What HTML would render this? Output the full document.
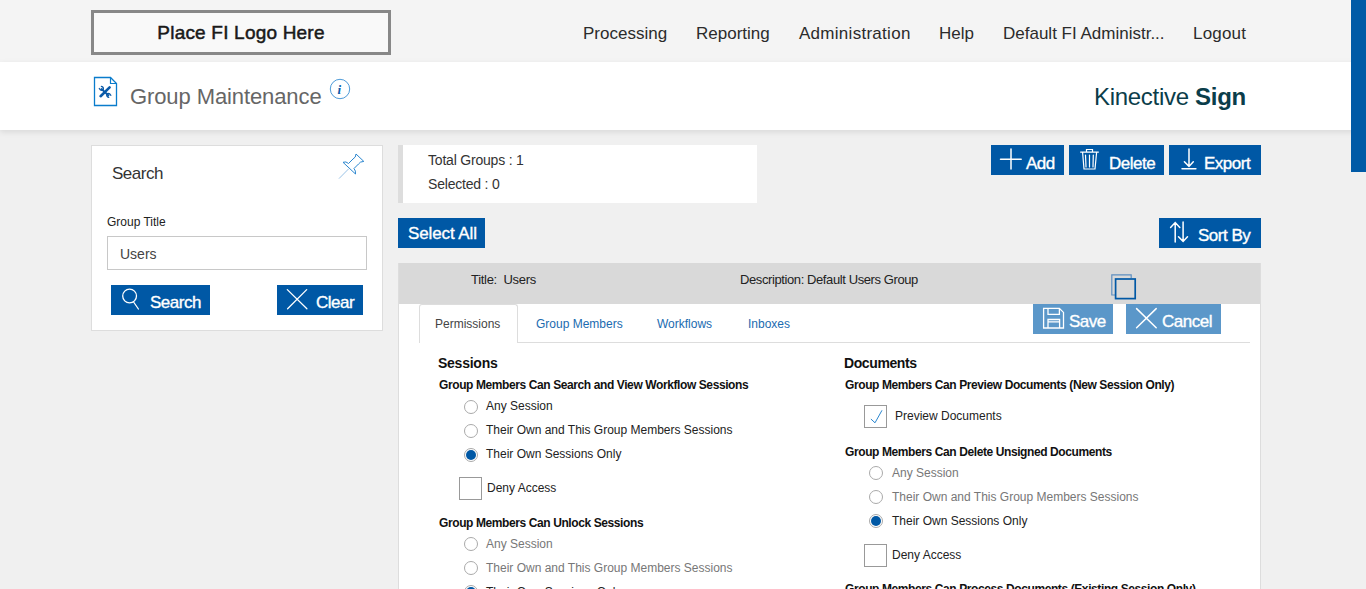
<!DOCTYPE html>
<html><head><meta charset="utf-8">
<style>
*{box-sizing:border-box;margin:0;padding:0}
html,body{width:1366px;height:589px;overflow:hidden;background:#f0f0f0;font-family:"Liberation Sans",sans-serif;color:#222}
.abs{position:absolute}
#top{position:absolute;left:0;top:0;width:1366px;height:62px;background:#f4f4f4}
#logo{position:absolute;left:91px;top:10px;width:300px;height:45px;border:3px solid #888;background:#f9f9f9;font-size:19px;font-weight:normal;color:#1a1a1a;text-align:center;line-height:39px;-webkit-text-stroke:0.5px #1a1a1a;letter-spacing:0.2px}
.nav{position:absolute;top:24px;font-size:17px;color:#2b2b2b;white-space:nowrap}
#band{position:absolute;left:0;top:62px;width:1366px;height:68px;background:#fff;box-shadow:0 2px 6px rgba(0,0,0,.10)}
#scroll{position:absolute;left:1351px;top:0;width:15px;height:172px;background:#005aa6}
.btn{position:absolute;background:#0058a5;color:#fff;font-size:17px;white-space:nowrap}
.btn span{position:absolute;-webkit-text-stroke:0.35px #fff;letter-spacing:-0.5px}
.btn svg{position:absolute}
.panel{position:absolute;background:#fff;border:1px solid #ddd}
.t12{font-size:12px}
.lbl{position:absolute;font-size:12px;color:#222;white-space:nowrap}
.gry{color:#777}
.hd{position:absolute;font-size:12px;font-weight:bold;color:#111;white-space:nowrap;letter-spacing:-0.4px}
.radio{position:absolute;width:14px;height:14px;border:1px solid #aaa;border-radius:50%;background:#fff}
.radio.on::after{content:"";position:absolute;left:1px;top:1px;width:10px;height:10px;border-radius:50%;background:#0058a5}
.cb{position:absolute;width:23px;height:23px;border:1px solid #999;background:#fff}
</style></head><body>
<div id="top"></div>
<div id="logo">Place FI Logo Here</div>
<div class="nav" style="left:583px">Processing</div>
<div class="nav" style="left:696px">Reporting</div>
<div class="nav" style="left:799px;letter-spacing:0.28px">Administration</div>
<div class="nav" style="left:939px">Help</div>
<div class="nav" style="left:1003px">Default FI Administr...</div>
<div class="nav" style="left:1193px;letter-spacing:0.2px">Logout</div>
<div id="band"></div>
<div class="abs" style="left:130px;top:84px;font-size:22px;color:#666;letter-spacing:-0.1px">Group Maintenance</div>
<div class="abs" style="left:1094px;top:83px;font-size:24px;color:#0b3d4a;letter-spacing:-0.3px">Kinective <b>Sign</b></div>
<div id="scroll"></div>

<!-- search panel -->
<div class="panel" style="left:91px;top:145px;width:292px;height:186px"></div>
<div class="abs" style="left:112px;top:164px;font-size:17px;color:#333;letter-spacing:-0.5px">Search</div>
<div class="lbl" style="left:107px;top:215px">Group Title</div>
<div class="abs" style="left:107px;top:236px;width:260px;height:34px;border:1px solid #c8c8c8;background:#fff"></div>
<div class="abs" style="left:120px;top:246px;font-size:14px;color:#444">Users</div>
<div class="btn" style="left:111px;top:285px;width:99px;height:30px"><span style="left:39px;top:8px">Search</span></div>
<div class="btn" style="left:277px;top:285px;width:86px;height:30px"><span style="left:39px;top:8px">Clear</span></div>

<!-- info -->
<div class="abs" style="left:398px;top:145px;width:359px;height:58px;background:#fff;border-left:5px solid #ddd"></div>
<div class="lbl" style="left:428px;top:152px;font-size:14px;color:#333;letter-spacing:-0.2px">Total Groups : 1</div>
<div class="lbl" style="left:428px;top:176px;font-size:14px;color:#333;letter-spacing:-0.2px">Selected : 0</div>
<div class="btn" style="left:398px;top:218px;width:87px;height:30px"><span style="left:10px;top:6px;letter-spacing:-0.1px">Select All</span></div>

<div class="btn" style="left:991px;top:145px;width:73px;height:30px"><span style="left:35px;top:9px">Add</span></div>
<div class="btn" style="left:1069px;top:145px;width:95px;height:30px"><span style="left:40px;top:9px">Delete</span></div>
<div class="btn" style="left:1169px;top:145px;width:92px;height:30px"><span style="left:35px;top:9px">Export</span></div>
<div class="btn" style="left:1159px;top:218px;width:102px;height:30px"><span style="left:39px;top:8px">Sort By</span></div>

<!-- card -->
<div class="abs" style="left:398px;top:263px;width:863px;height:326px;background:#fff;border-left:1px solid #ddd;border-right:1px solid #ddd"></div>
<div class="abs" style="left:399px;top:263px;width:861px;height:41px;background:#d9d9d9"></div>
<div class="lbl" style="left:471px;top:272px;font-size:13px;color:#222;letter-spacing:-0.3px">Title:&nbsp; Users</div>
<div class="lbl" style="left:740px;top:272px;font-size:13px;color:#222;letter-spacing:-0.4px">Description: Default Users Group</div>


<!-- tabs -->
<div class="abs" style="left:419px;top:342px;width:831px;height:1px;background:#ddd"></div>
<div class="abs" style="left:419px;top:304px;width:99px;height:39px;background:#fff;border:1px solid #ddd;border-bottom:none;border-radius:3px 3px 0 0"></div>
<div class="lbl" style="left:435px;top:317px;color:#444">Permissions</div>
<div class="lbl" style="left:536px;top:317px;color:#1b6bb0">Group Members</div>
<div class="lbl" style="left:657px;top:317px;color:#1b6bb0">Workflows</div>
<div class="lbl" style="left:748px;top:317px;color:#1b6bb0">Inboxes</div>
<div class="btn" style="left:1033px;top:304px;width:80px;height:30px;background:#5b97c9"><span style="left:36px;top:8px">Save</span></div>
<div class="btn" style="left:1126px;top:304px;width:95px;height:30px;background:#5b97c9"><span style="left:36px;top:8px">Cancel</span></div>

<!-- sessions -->
<div class="hd" style="left:438px;top:355px;font-size:14px;letter-spacing:-0.25px">Sessions</div>
<div class="hd" style="left:439px;top:378px">Group Members Can Search and View Workflow Sessions</div>
<div class="radio" style="left:464px;top:400px"></div><div class="lbl" style="left:486px;top:399px">Any Session</div>
<div class="radio" style="left:464px;top:424px"></div><div class="lbl" style="left:486px;top:423px">Their Own and This Group Members Sessions</div>
<div class="radio on" style="left:464px;top:448px"></div><div class="lbl" style="left:486px;top:447px">Their Own Sessions Only</div>
<div class="cb" style="left:459px;top:477px"></div><div class="lbl" style="left:487px;top:481px">Deny Access</div>
<div class="hd" style="left:439px;top:516px">Group Members Can Unlock Sessions</div>
<div class="radio" style="left:464px;top:537px"></div><div class="lbl gry" style="left:486px;top:537px">Any Session</div>
<div class="radio" style="left:464px;top:561px"></div><div class="lbl gry" style="left:486px;top:561px">Their Own and This Group Members Sessions</div>
<div class="radio on" style="left:464px;top:585px"></div><div class="lbl" style="left:486px;top:585px">Their Own Sessions Only</div>

<!-- documents -->
<div class="hd" style="left:844px;top:355px;font-size:14px;letter-spacing:-0.4px">Documents</div>
<div class="hd" style="left:845px;top:378px">Group Members Can Preview Documents (New Session Only)</div>
<div class="cb" style="left:864px;top:405px"></div><div class="lbl" style="left:895px;top:409px">Preview Documents</div>
<div class="hd" style="left:845px;top:445px">Group Members Can Delete Unsigned Documents</div>
<div class="radio" style="left:869px;top:466px"></div><div class="lbl gry" style="left:892px;top:466px">Any Session</div>
<div class="radio" style="left:869px;top:490px"></div><div class="lbl gry" style="left:892px;top:490px">Their Own and This Group Members Sessions</div>
<div class="radio on" style="left:869px;top:514px"></div><div class="lbl" style="left:892px;top:514px">Their Own Sessions Only</div>
<div class="cb" style="left:864px;top:544px"></div><div class="lbl" style="left:892px;top:548px">Deny Access</div>
<div class="hd" style="left:845px;top:582px">Group Members Can Process Documents (Existing Session Only)</div>

<svg class="abs" style="left:0;top:0;z-index:5" width="1366" height="589" viewBox="0 0 1366 589" fill="none">
<!-- doc icon -->
<path d="M94.5 77.5 H110.5 L116.5 83.5 V105.5 H94.5 Z" stroke="#0a7ccc" stroke-width="1.3"/>
<path d="M110.5 77.5 V83.5 H116.5" stroke="#0a7ccc" stroke-width="1.2"/>
<g stroke="#0b5aa8" stroke-linecap="round">
<path d="M100.6 96.2 L109.6 87.4" stroke-width="2.6"/>
<path d="M101.5 89 L108.5 95.5" stroke-width="1.8"/>
<path d="M99.3 88.5 Q100.5 90.8 102.8 90.2 M101.4 86.4 Q103.8 87 103.3 89.6" stroke-width="1.3"/>
<path d="M110.8 95.3 Q109.6 93 107.3 93.6 M108.7 97.4 Q106.3 96.8 106.8 94.2" stroke-width="1.3"/>
</g>
<!-- info -->
<circle cx="340" cy="89" r="9.7" stroke="#3a8fd3" stroke-width="0.9"/>
<text x="337.6" y="93.6" font-family="Liberation Serif" font-style="italic" font-weight="bold" font-size="13" fill="#0b5aa8">i</text>
<!-- pin -->
<path d="M343 162.3 Q346 161 348.5 163.5 L353 159 Q356 157.5 356 154 L363.8 161.4 Q360 161.5 358.5 164 L354 168.5 Q356 171 355.5 174 Z" stroke="#2a86cf" stroke-width="1"/>
<path d="M348.7 168.8 L339 178.6" stroke="#7fb3e0" stroke-width="0.8"/>
<!-- search -->
<g stroke="#fff" stroke-width="1.3" stroke-linecap="round">
<circle cx="129.6" cy="296" r="6.9"/>
<path d="M133.6 302 L138.4 309"/>
<path d="M287.3 289.6 L306.9 308.7 M306.7 289.6 L287.6 308.7"/>
<!-- plus -->
<path d="M1011 149 V169 M1000.5 159.3 H1021.2" stroke-width="1.5"/>
<!-- trash -->
<path d="M1080.6 152.1 H1098.4 M1086.5 152 V149.5 H1092.5 V152 M1082.6 152.5 L1084 169 H1095 L1096.6 152.5 M1085.5 155 L1086 167 M1089.5 155 V167 M1093.3 155 L1093 167" stroke-width="1.2"/>
<!-- export -->
<path d="M1189 149 V166.4 M1184.4 161.8 L1189 166.4 L1193.3 161.8 M1182 168.7 H1195.9" stroke-width="1.5"/>
<!-- sort -->
<path d="M1175.2 222.6 V242 M1170.6 227.4 L1175.2 222.6 L1179.8 227.4 M1183.1 222 V241.4 M1178.5 236.8 L1183.1 241.4 L1187.5 236.8" stroke-width="1.5"/>
<!-- save -->
<path d="M1043.6 308.3 H1059.4 L1063.5 312.4 V328 H1043.6 Z M1048 308.3 V314.4 H1059.4 V308.3 M1048 328 V319.5 H1059.6 V328 M1048 321.8 H1059.6" stroke-width="1.3"/>
<!-- cancel -->
<path d="M1136.6 308.6 L1156.2 327.7 M1156.2 308.6 L1136.6 327.7" stroke-width="1.5"/>
</g>
<!-- copy -->
<path d="M1115 295 H1111.8 V274.8 H1131.2 V278" stroke="#5f8fc0" stroke-width="1.2"/>
<rect x="1115.6" y="279" width="19.6" height="19.6" stroke="#0058a5" stroke-width="1.7"/>
<!-- check -->
<path d="M870.9 419 L875 422.8 L882 410.3" stroke="#2a86cf" stroke-width="1"/>
</svg>
</body></html>
